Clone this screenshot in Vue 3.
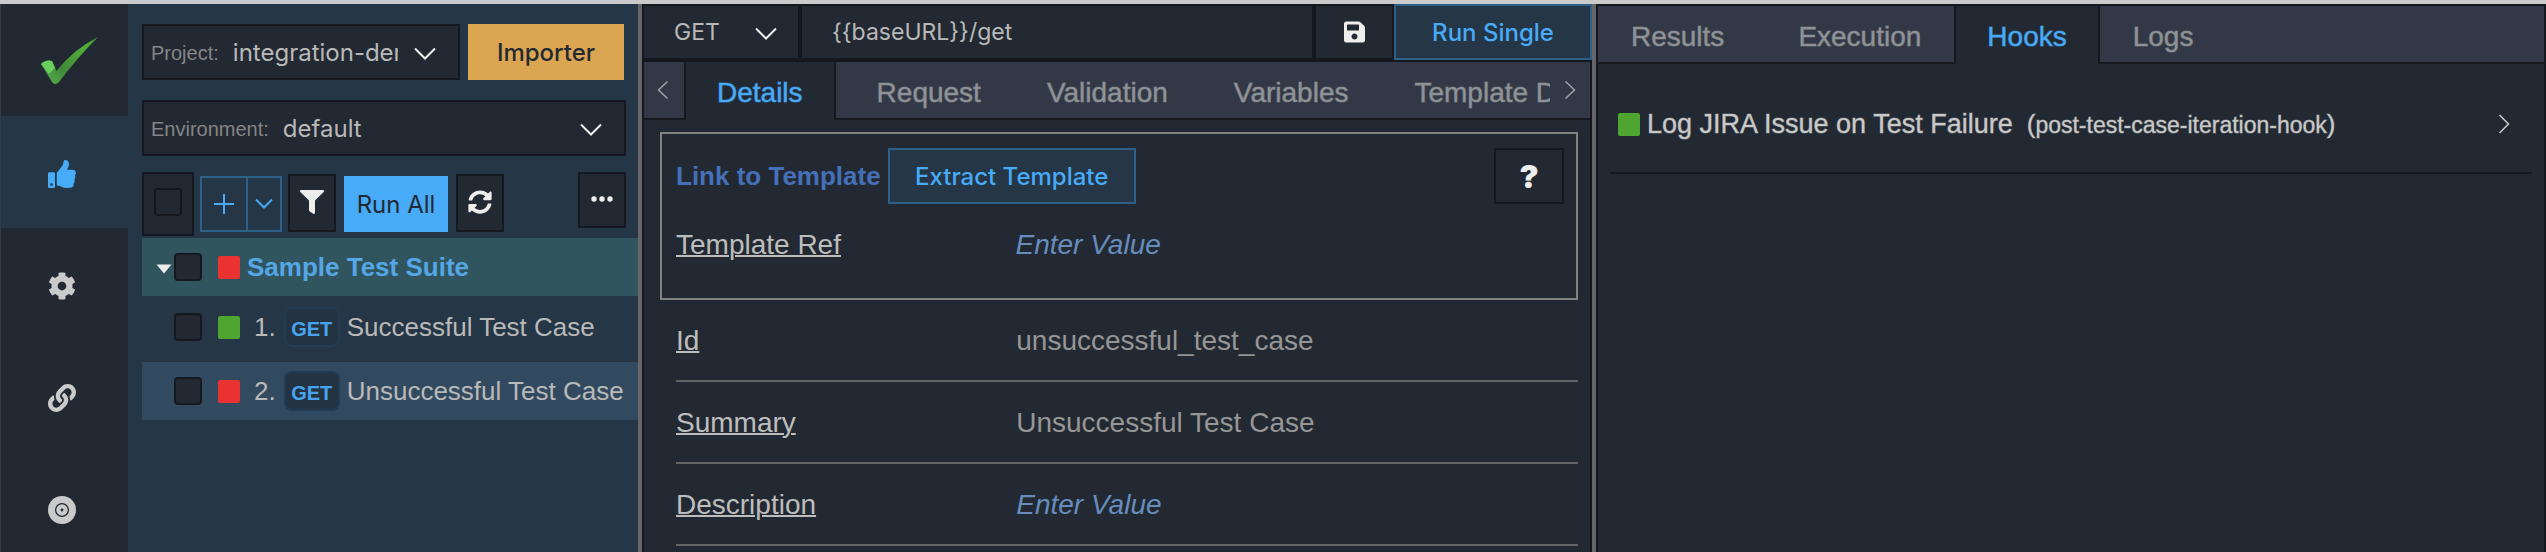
<script setup>
import { ref } from 'vue'

const project = ref('integration-demo')
const environment = ref('default')
const method = ref('GET')
const url = ref('{{baseURL}}/get')

const icons = {
  thumb: 'M104 224H24c-13.255 0-24 10.745-24 24v240c0 13.255 10.745 24 24 24h80c13.255 0 24-10.745 24-24V248c0-13.255-10.745-24-24-24zM64 472c-13.255 0-24-10.745-24-24s10.745-24 24-24 24 10.745 24 24-10.745 24-24 24zM384 81.452c0 42.416-25.97 66.208-33.277 94.548h101.723c33.397 0 59.397 27.746 59.553 58.098.084 17.938-7.546 37.249-19.439 49.197l-.11.11c9.836 23.337 8.237 56.037-9.308 79.469 8.681 25.895-.069 57.704-16.382 74.757 4.298 17.598 2.244 32.575-6.148 44.632C440.202 511.587 389.616 512 346.839 512l-2.845-.001c-48.287-.017-87.806-17.598-119.56-31.725-15.957-7.099-36.821-15.887-52.651-16.178-6.54-.12-11.783-5.457-11.783-11.998v-213.77c0-3.2 1.282-6.271 3.558-8.521 39.614-39.144 56.648-80.587 89.117-113.111 14.804-14.832 20.188-37.236 25.393-58.902C282.515 39.293 291.817 0 312 0c24 0 72 8 72 81.452z',
  cog: 'M487.4 315.7l-42.6-24.6c4.3-23.2 4.3-47 0-70.2l42.6-24.6c4.9-2.8 7.1-8.6 5.5-14-11.1-35.6-30-67.8-54.7-94.6-3.8-4.1-10-5.1-14.8-2.3L380.8 110c-17.9-15.4-38.5-27.3-60.8-35.1V25.8c0-5.6-3.9-10.5-9.4-11.7-36.7-8.2-74.3-7.8-109.2 0-5.5 1.2-9.4 6.1-9.4 11.7V75c-22.2 7.9-42.8 19.8-60.8 35.1L88.7 85.5c-4.9-2.8-11-1.9-14.8 2.3-24.7 26.7-43.6 58.9-54.7 94.6-1.7 5.4.6 11.2 5.5 14L67.3 221c-4.3 23.2-4.3 47 0 70.2l-42.6 24.6c-4.9 2.8-7.1 8.6-5.5 14 11.1 35.6 30 67.8 54.7 94.6 3.8 4.1 10 5.1 14.8 2.3l42.6-24.6c17.9 15.4 38.5 27.3 60.8 35.1v49.2c0 5.6 3.9 10.5 9.4 11.7 36.7 8.2 74.3 7.8 109.2 0 5.5-1.2 9.4-6.1 9.4-11.7v-49.2c22.2-7.9 42.8-19.8 60.8-35.1l42.6 24.6c4.9 2.8 11 1.9 14.8-2.3 24.7-26.7 43.6-58.9 54.7-94.6 1.5-5.5-.7-11.3-5.6-14.1zM256 336c-44.1 0-80-35.9-80-80s35.9-80 80-80 80 35.9 80 80-35.9 80-80 80z',
  link: 'M326.612 185.391c59.747 59.809 58.927 155.698.36 214.59-.11.12-.24.25-.36.37l-67.2 67.2c-59.27 59.27-155.699 59.262-214.96 0-59.27-59.26-59.27-155.7 0-214.96l37.106-37.106c9.84-9.84 26.786-3.3 27.294 10.606.648 17.722 3.826 35.527 9.69 52.721 1.986 5.822.567 12.262-3.783 16.612l-13.087 13.087c-28.026 28.026-28.905 73.66-1.155 101.96 28.024 28.579 74.086 28.749 102.325.51l67.2-67.19c28.191-28.191 28.073-73.757 0-101.83-3.701-3.694-7.429-6.564-10.341-8.569a16.037 16.037 0 0 1-6.947-12.606c-.396-10.567 3.348-21.456 11.698-29.806l21.054-21.055c5.521-5.521 14.182-6.199 20.584-1.731a152.482 152.482 0 0 1 20.522 17.197zM467.547 44.449c-59.261-59.262-155.69-59.27-214.96 0l-67.2 67.2c-.12.12-.25.25-.36.37-58.566 58.892-59.387 154.781.36 214.59a152.454 152.454 0 0 0 20.521 17.196c6.402 4.468 15.064 3.789 20.584-1.731l21.054-21.055c8.35-8.35 12.094-19.239 11.698-29.806a16.037 16.037 0 0 0-6.947-12.606c-2.912-2.005-6.64-4.875-10.341-8.569-28.073-28.073-28.191-73.639 0-101.83l67.2-67.19c28.239-28.239 74.3-28.069 102.325.51 27.75 28.3 26.872 73.934-1.155 101.96l-13.087 13.087c-4.35 4.35-5.769 10.79-3.783 16.612 5.864 17.194 9.042 34.999 9.69 52.721.509 13.906 17.454 20.446 27.294 10.606l37.106-37.106c59.271-59.259 59.271-155.699.001-214.959z',
  save: 'M433.941 129.941l-83.882-83.882A48 48 0 0 0 316.118 32H48C21.49 32 0 53.49 0 80v352c0 26.51 21.49 48 48 48h352c26.51 0 48-21.49 48-48V163.882a48 48 0 0 0-14.059-33.941zM224 416c-35.346 0-64-28.654-64-64 0-35.346 28.654-64 64-64s64 28.654 64 64c0 35.346-28.654 64-64 64zm96-304.52V212c0 6.627-5.373 12-12 12H76c-6.627 0-12-5.373-12-12V108c0-6.627 5.373-12 12-12h228.52c3.183 0 6.235 1.264 8.485 3.515l3.48 3.48A11.996 11.996 0 0 1 320 111.48z',
  filter: 'M487.976 0H24.028C2.71 0-8.047 25.866 7.058 40.971L192 225.941V432c0 7.831 3.821 15.17 10.237 19.662l80 55.98C298.02 518.69 320 507.493 320 487.98V225.941l184.947-184.97C520.021 25.896 509.338 0 487.976 0z',
  sync: 'M370.72 133.28C339.458 104.008 298.888 87.962 255.848 88c-77.458.068-144.328 53.178-162.791 126.85-1.344 5.363-6.122 9.15-11.651 9.15H24.103c-7.498 0-13.194-6.807-11.807-14.176C33.933 94.924 134.813 8 256 8c66.448 0 126.791 26.136 171.315 68.685L463.03 40.97C478.149 25.851 504 36.559 504 57.941V192c0 13.255-10.745 24-24 24H345.941c-21.382 0-32.09-25.851-16.971-40.971l41.75-41.749zM32 296h134.059c21.382 0 32.09 25.851 16.971 40.971l-41.75 41.75c31.262 29.273 71.835 45.319 114.876 45.28 77.418-.07 144.315-53.144 162.787-126.849 1.344-5.363 6.122-9.15 11.651-9.15h57.304c7.498 0 13.194 6.807 11.807 14.176C478.067 417.076 377.187 504 256 504c-66.448 0-126.791-26.136-171.315-68.685L48.97 471.03C33.851 486.149 8 475.441 8 454.059V320c0-13.255 10.745-24 24-24z'
}

const cases = [
  { n: 1, name: 'Successful Test Case', state: 'pass', selected: false },
  { n: 2, name: 'Unsuccessful Test Case', state: 'fail', selected: true }
]

const fields = [
  { label: 'Id', value: 'unsuccessful_test_case' },
  { label: 'Summary', value: 'Unsuccessful Test Case' },
  { label: 'Description', value: '' }
]

const detailTabs = ['Request', 'Validation', 'Variables', 'Template Data']
</script>

<template>
  <div class="app">
    <nav class="rail" aria-label="Main">
      <div class="rail-item">
        <svg width="60" height="52" viewBox="0 0 60 52" aria-hidden="true">
          <defs>
            <linearGradient id="tick" x1="0" y1="1" x2="1" y2="0">
              <stop offset="0" stop-color="#5bb552" />
              <stop offset=".35" stop-color="#3f8a38" />
              <stop offset=".75" stop-color="#52ad3a" />
              <stop offset="1" stop-color="#3f9a30" />
            </linearGradient>
          </defs>
          <path d="M1 28 Q6 23 12 25 L16.500 35 Q34 13 58 1 Q37 22 19 46 Q15 50 12 46 Z" fill="url(#tick)" />
          <path d="M1 28 Q6 23 12 25 L15 32 Q12 35 9 38 Z" fill="#69cf5e" />
        </svg>
      </div>
      <button class="rail-item active" aria-label="Tests">
        <svg width="28" height="28" viewBox="0 0 512 512"><path :d="icons.thumb" fill="currentColor" /></svg>
      </button>
      <button class="rail-item" aria-label="Settings">
        <svg width="28" height="28" viewBox="0 0 512 512"><path :d="icons.cog" fill="currentColor" /></svg>
      </button>
      <button class="rail-item" aria-label="Links">
        <svg width="28" height="28" viewBox="0 0 512 512"><path :d="icons.link" fill="currentColor" /></svg>
      </button>
      <button class="rail-item" aria-label="Record">
        <svg width="28" height="28" viewBox="0 0 28 28">
          <circle cx="14" cy="14" r="14" fill="currentColor" />
          <circle cx="14" cy="14" r="6.4" fill="none" stroke="#232932" stroke-width="1.3" />
          <circle cx="14" cy="14" r="1.4" fill="#232932" />
        </svg>
      </button>
    </nav>

    <aside class="side">
      <div class="side-head">
        <div class="row">
          <div class="picker">
            <label for="project">Project:</label>
            <select id="project" v-model="project"><option>integration-demo</option></select>
            <svg class="chev" width="22" height="14" viewBox="0 0 22 14"><path d="M1 1.500L11 11.500L21 1.500" /></svg>
          </div>
          <button class="importer">Importer</button>
        </div>
        <div class="picker env">
          <label for="environment">Environment:</label>
          <select id="environment" v-model="environment"><option>default</option></select>
          <svg class="chev" width="22" height="14" viewBox="0 0 22 14"><path d="M1 1.500L11 11.500L21 1.500" /></svg>
        </div>
        <div class="tools">
          <span class="check-wrap"><input type="checkbox" aria-label="Select all" /></span>
          <div class="split">
            <button aria-label="Add"><svg width="20" height="20" viewBox="0 0 20 20"><path d="M0 10H20M10 0V20" /></svg></button>
            <button aria-label="Add options"><svg width="18" height="12" viewBox="0 0 18 12"><path d="M1 1.500L9 9.500L17 1.500" /></svg></button>
          </div>
          <button class="tool" aria-label="Filter"><svg width="24" height="24" viewBox="0 0 512 512"><path :d="icons.filter" fill="currentColor" /></svg></button>
          <button class="run-all">Run All</button>
          <button class="tool" aria-label="Refresh"><svg width="24" height="24" viewBox="0 0 512 512"><path :d="icons.sync" fill="currentColor" /></svg></button>
          <button class="tool more" aria-label="More">
            <svg width="22" height="6" viewBox="0 0 22 6"><g fill="currentColor"><circle cx="3" cy="3" r="2.700" /><circle cx="11" cy="3" r="2.700" /><circle cx="19" cy="3" r="2.700" /></g></svg>
          </button>
        </div>
      </div>

      <ul class="tree">
        <li class="node suite">
          <svg class="caret" width="16" height="10" viewBox="0 0 16 10"><path d="M0.500 0.500H15.500L8 9.500Z" fill="#eee" /></svg>
          <input type="checkbox" aria-label="Select Sample Test Suite" />
          <i class="dot fail"></i>
          <span class="suite-name">Sample Test Suite</span>
        </li>
        <li v-for="c in cases" :key="c.n" class="node case" :class="{ selected: c.selected }">
          <input type="checkbox" :aria-label="'Select ' + c.name" />
          <i class="dot" :class="c.state"></i>
          <span class="num">{{ c.n }}.</span>
          <b class="badge">GET</b>
          <span class="name">{{ c.name }}</span>
        </li>
      </ul>
    </aside>

    <div class="divider"></div>

    <main class="pane">
      <div class="request">
        <div class="method">
          <select v-model="method" aria-label="Method"><option>GET</option></select>
          <svg class="chev" width="22" height="14" viewBox="0 0 22 14"><path d="M1 1.500L11 11.500L21 1.500" /></svg>
        </div>
        <input v-model="url" class="url" type="text" aria-label="URL" />
        <button class="save" aria-label="Save"><svg width="21" height="24" viewBox="0 0 448 512"><path :d="icons.save" fill="currentColor" /></svg></button>
        <button class="outline run-single">Run Single</button>
      </div>

      <div class="tabs">
        <button class="scroll prev" aria-label="Previous tabs"><svg width="12" height="20" viewBox="0 0 12 20"><path d="M10.500 1.500L1.500 10L10.500 18.500" /></svg></button>
        <div class="tab-list" role="tablist">
          <button class="tab current" role="tab">Details</button>
          <button v-for="t in detailTabs" :key="t" class="tab" role="tab">{{ t }}</button>
        </div>
        <button class="scroll next" aria-label="Next tabs"><svg width="12" height="20" viewBox="0 0 12 20"><path d="M1.500 1.500L10.500 10L1.500 18.500" /></svg></button>
      </div>

      <section class="template">
        <div class="template-head">
          <h2>Link to Template</h2>
          <button class="outline extract">Extract Template</button>
          <button class="help" aria-label="Help">?</button>
        </div>
        <div class="field bare">
          <a href="#">Template Ref</a>
          <em>Enter Value</em>
        </div>
      </section>

      <div class="fields">
        <div v-for="f in fields" :key="f.label" class="field">
          <a href="#">{{ f.label }}</a>
          <span v-if="f.value">{{ f.value }}</span>
          <em v-else>Enter Value</em>
        </div>
      </div>
    </main>

    <div class="divider"></div>

    <section class="pane results">
      <div class="tabs" role="tablist">
        <button class="tab lead" role="tab">Results</button>
        <button class="tab" role="tab">Execution</button>
        <button class="tab current" role="tab">Hooks</button>
        <button class="tab" role="tab">Logs</button>
      </div>
      <div class="hook">
        <i class="dot pass"></i>
        <span class="hook-name">Log JIRA Issue on Test Failure</span>
        <span class="hook-type">(<small>post-test-case-iteration-hook</small>)</span>
        <svg class="go" width="12" height="20" viewBox="0 0 12 20"><path d="M1.500 1L10.500 10L1.500 19" /></svg>
      </div>
    </section>
  </div>
</template>

<style>
html,
body {
  margin: 0;
  background: #232932;
}
</style>

<style scoped>
.app {
  --ink: #15181f;
  --panel: #232932;
  --side: #253646;
  --tab: #333846;
  --blue: #48abf8;
  --ui: Inter, "Noto Sans", sans-serif;
  display: grid;
  grid-template-columns: 128px 510px 4px minmax(0, 1fr) 4px minmax(0, 1fr);
  min-height: 100vh;
  box-sizing: border-box;
  border-top: 4px solid #cbcbcb;
  background: var(--panel);
  color: #b9b9b9;
  font-family: "Liberation Sans", Arial, sans-serif;
  font-size: 26px;
}
.app * {
  box-sizing: border-box;
}
button,
select,
input {
  margin: 0;
  padding: 0;
  border: 0;
  border-radius: 0;
  background: none;
  color: inherit;
  font: inherit;
  appearance: none;
  outline: none;
}
svg {
  display: block;
  flex: none;
}

/* Icon rail */
.rail {
  display: flex;
  flex-direction: column;
  border-left: 1px solid #353c45;
  background: var(--panel);
}
.rail-item {
  display: flex;
  align-items: center;
  justify-content: center;
  width: 100%;
  height: 112px;
  padding: 4px 6px 0 0;
  color: #cacaca;
}
.rail-item:first-child {
  padding: 4px 0 0 10px;
}
.rail-item.active {
  background: var(--side);
  color: var(--blue);
}

/* Sidebar */
.side {
  background: var(--side);
}
.side-head {
  padding: 20px 12px 0 14px;
}
.row {
  display: flex;
  gap: 8px;
  padding-right: 2px;
}
.picker {
  display: flex;
  align-items: center;
  flex: 1;
  min-width: 0;
  height: 56px;
  padding: 0 22px 0 7px;
  border: 2px solid var(--ink);
  background: var(--panel);
}
.picker.env {
  margin: 20px 0 16px;
}
.picker label {
  padding-top: 2px;
  color: #858585;
  font-size: 20px;
}
.picker select {
  flex: 1;
  width: 0;
  height: 100%;
  margin: 0 16px 0 14px;
  font-family: var(--ui);
  font-size: 24px;
}
.chev {
  margin-top: 4px;
}
.chev path {
  fill: none;
  stroke: #eee;
  stroke-width: 2;
}
.importer {
  width: 156px;
  height: 56px;
  background: #dba551;
  color: #232932;
  font-family: var(--ui);
  font-size: 24px;
  font-weight: 500;
}
.tools {
  display: flex;
  align-items: flex-start;
}
.check-wrap {
  display: flex;
  align-items: center;
  justify-content: center;
  width: 52px;
  height: 64px;
  margin-right: 6px;
  padding-bottom: 4px;
  border: 2px solid var(--ink);
  background: var(--panel);
}
input[type="checkbox"] {
  flex: none;
  width: 28px;
  height: 28px;
  border: 2px solid var(--ink);
  border-radius: 4px;
  background: var(--panel);
}
.split {
  display: flex;
  height: 56px;
  margin: 4px 6px 0 0;
  border: 2px solid #2c6088;
}
.split button {
  display: flex;
  align-items: center;
  justify-content: center;
  width: 32px;
}
.split button:first-child {
  width: 46px;
  border-right: 2px solid #2c6088;
}
.split path {
  fill: none;
  stroke: var(--blue);
  stroke-width: 2;
}
.tool {
  display: flex;
  align-items: center;
  justify-content: center;
  width: 48px;
  height: 58px;
  margin-top: 2px;
  padding-bottom: 2px;
  border: 2px solid var(--ink);
  background: var(--panel);
  color: #eee;
}
.tool.more {
  height: 56px;
  margin: 0 0 0 auto;
}
.run-all {
  width: 104px;
  height: 56px;
  margin: 4px 8px 0;
  background: var(--blue);
  color: #232932;
  font-family: var(--ui);
  font-size: 24px;
}
.tree {
  margin: 2px 0 0 14px;
  padding: 0;
  list-style: none;
}
.node {
  display: flex;
  align-items: center;
  white-space: nowrap;
}
.suite {
  height: 58px;
  padding-left: 14px;
  background: #31555f;
}
.caret {
  margin: 4px 2px 0 0;
}
.dot {
  flex: none;
  width: 22px;
  height: 23px;
  margin-left: 16px;
  border-radius: 2px;
}
.dot.fail {
  background: #ea3330;
}
.dot.pass {
  background: #4ea52f;
}
.suite-name {
  margin-left: 7px;
  color: #55a6e4;
  font-weight: bold;
}
.case {
  height: 66px;
  padding: 0 0 4px 32px;
}
.case.selected {
  height: 58px;
  padding-bottom: 0;
  background: #324a60;
}
.num {
  margin-left: 14px;
}
.badge {
  display: flex;
  align-items: center;
  justify-content: center;
  width: 56px;
  height: 40px;
  margin: 0 7px 0 8px;
  padding-top: 4px;
  border: 2px solid #213c53;
  border-radius: 8px;
  background: #233341;
  color: #48a4ee;
  font-size: 20px;
}

.divider {
  background: #666669;
}

/* Panes */
.pane {
  border: solid var(--ink);
  border-width: 2px 2px 0;
  background: var(--panel);
}
.request {
  display: flex;
  height: 56px;
  margin: -2px -2px 0 0;
  font-family: var(--ui);
  font-size: 23px;
}
.method {
  display: flex;
  align-items: center;
  width: 156px;
  border: solid var(--ink);
  border-width: 2px 2px 2px 0;
  padding: 0 21px 0 30px;
}
.method select {
  flex: 1;
  width: 0;
  height: 100%;
}
.url {
  flex: 1;
  min-width: 0;
  padding: 0 30px;
  border: 2px solid var(--ink);
}
.save {
  display: flex;
  align-items: center;
  justify-content: center;
  width: 80px;
  border: 2px solid var(--ink);
  color: #eee;
}
.outline {
  border: 2px solid #2c6088;
  background: var(--side);
  color: var(--blue);
  font-family: var(--ui);
  font-size: 24px;
  font-weight: 500;
  white-space: nowrap;
}
.run-single {
  width: 198px;
}
.tabs {
  display: flex;
  height: 60px;
  border: solid var(--ink);
  border-width: 2px 0;
  background: var(--tab);
}
.results .tabs {
  height: 58px;
  border-top: 0;
}
.tab-list {
  display: flex;
  flex: 1;
  min-width: 0;
  height: 58px;
  overflow: hidden;
}
.tab {
  flex: none;
  height: 56px;
  padding: 6px 33px 0;
  color: #8f9296;
  font-size: 28px;
  white-space: nowrap;
  -webkit-text-stroke: 1px rgb(143 146 150 / 50%);
}
.tab.current {
  height: 58px;
  padding: 6px 31px 2px;
  border: solid var(--ink);
  border-width: 0 2px;
  background: var(--panel);
  color: var(--blue);
  -webkit-text-stroke-color: rgb(72 171 248 / 50%);
}
.tab-list .tab.current + .tab {
  margin-left: 8px;
}
.tab.lead {
  margin-right: 8px;
}
.scroll {
  display: flex;
  align-items: center;
  justify-content: center;
  width: 40px;
  height: 56px;
}
.prev {
  padding-right: 2px;
}
.scroll path,
.go path {
  fill: none;
  stroke: #a0a2a6;
  stroke-width: 1.5;
}
.template {
  margin: 12px 12px 0 16px;
  padding: 14px 12px 20px 14px;
  border: 2px solid #828282;
}
.template-head {
  display: flex;
  align-items: center;
  gap: 7px;
}
.template-head h2 {
  margin: 0;
  color: #4570b8;
  font-size: 26px;
}
.extract {
  width: 248px;
  height: 56px;
}
.help {
  width: 70px;
  height: 56px;
  margin-left: auto;
  border: 2px solid var(--ink);
  color: #eee;
  font-family: var(--ui);
  font-size: 32px;
  font-weight: 900;
}
.fields {
  margin: 0 12px 0 32px;
}
.field {
  display: grid;
  grid-template-columns: 3fr 5fr;
  align-items: center;
  height: 82px;
  padding-top: 2px;
  border-bottom: 2px solid #636466;
  font-size: 28px;
}
.field.bare {
  height: 74px;
  margin-right: -12px;
  padding-top: 8px;
  border: 0;
}
.field a {
  color: #bdbdbd;
  text-decoration: underline;
  text-decoration-thickness: 2px;
}
.field span,
.field em {
  padding-left: 2px;
}
.field span {
  color: #969696;
}
.field em {
  color: #668dbd;
}
.hook {
  display: flex;
  align-items: center;
  height: 110px;
  margin: 0 12px;
  padding: 22px 22px 10px 8px;
  border-bottom: 2px solid var(--ink);
  color: #c9c9c9;
  white-space: nowrap;
}
.hook .dot {
  margin: 0 7px 0 0;
}
.hook-name,
.hook-type {
  -webkit-text-stroke: 1px rgb(201 201 201 / 40%);
}
.hook-name {
  font-size: 27px;
}
.hook-type {
  margin-left: 14px;
}
.hook-type small {
  font-size: 23px;
}
.go {
  margin-left: auto;
}
.go path {
  stroke: #ccc;
}
</style>
